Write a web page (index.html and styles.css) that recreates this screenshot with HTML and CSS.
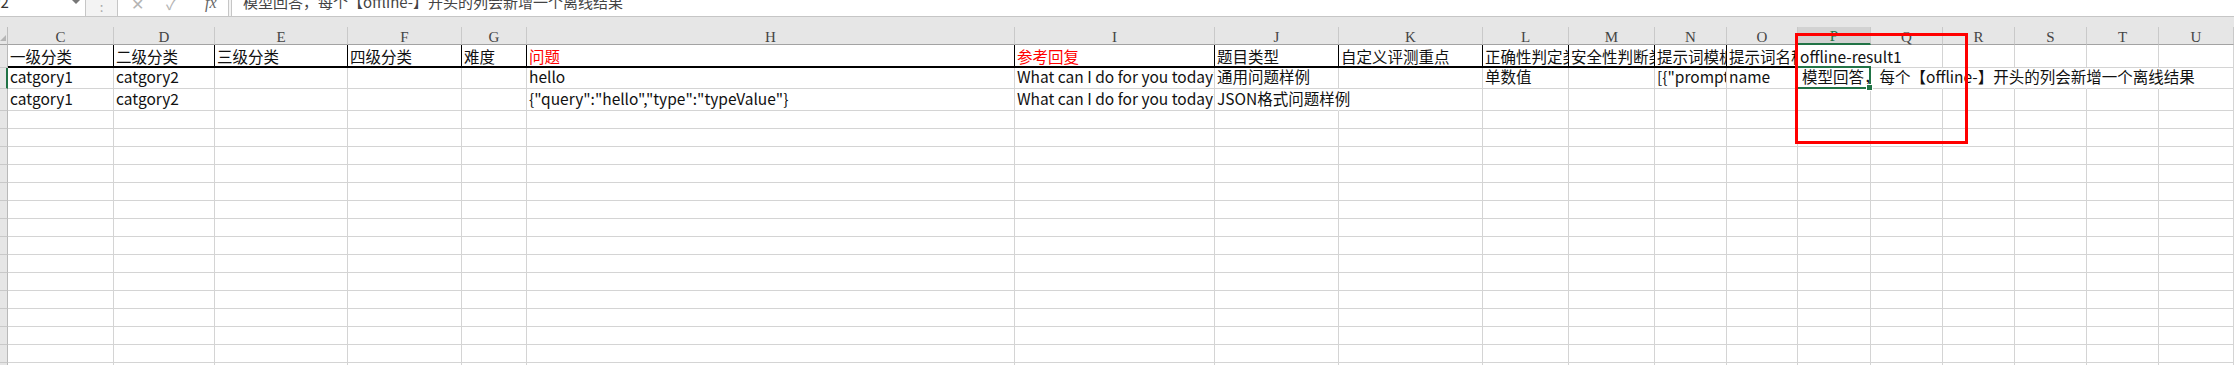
FILE: index.html
```
<!DOCTYPE html>
<html>

<head>
    <title>offline result sheet</title>
    <link rel="stylesheet" href="styles.css">
</head>

<body>
    <div class="page">

        <!-- formula bar -->
        <div class="fbar">
            <div class="namebox"><span class="nametext">P2</span><span class="drop"></span></div>
            <div class="dots">:</div>
            <div class="fxbox">
                <span class="fxicon off">✕</span>
                <span class="fxicon off">✓</span>
                <span class="fxicon fx">fx</span>
            </div>
            <div class="formula"><span class="ftext">模型回答，每个【offline-】开头的列会新增一个离线结果</span></div>
        </div>
        <div class="band"></div>

        <div class="sheet" id="sheet">
            <!-- column letters -->
            <div class="corner"><span class="tri"></span></div>
            <div class="ch">C</div>
            <div class="ch">D</div>
            <div class="ch">E</div>
            <div class="ch">F</div>
            <div class="ch">G</div>
            <div class="ch">H</div>
            <div class="ch">I</div>
            <div class="ch">J</div>
            <div class="ch">K</div>
            <div class="ch">L</div>
            <div class="ch">M</div>
            <div class="ch">N</div>
            <div class="ch">O</div>
            <div class="ch on">P</div>
            <div class="ch">Q</div>
            <div class="ch">R</div>
            <div class="ch">S</div>
            <div class="ch">T</div>
            <div class="ch">U</div>

            <!-- row 1 : headers -->
            <div class="rh"></div>
            <div class="c hd">一级分类</div>
            <div class="c hd">二级分类</div>
            <div class="c hd">三级分类</div>
            <div class="c hd">四级分类</div>
            <div class="c hd">难度</div>
            <div class="c hd red">问题</div>
            <div class="c hd red">参考回复</div>
            <div class="c hd">题目类型</div>
            <div class="c hd">自定义评测重点</div>
            <div class="c hd">正确性判定类型</div>
            <div class="c hd">安全性判断类型</div>
            <div class="c hd">提示词模板</div>
            <div class="c hd">提示词名称</div>
            <div class="c top spill nob">offline-result1</div>
            <div class="c top"></div>
            <div class="c top"></div>
            <div class="c top"></div>
            <div class="c top"></div>
            <div class="c top"></div>

            <!-- row 2 -->
            <div class="rh on"></div>
            <div class="c">catgory1</div>
            <div class="c">catgory2</div>
            <div class="c"></div>
            <div class="c"></div>
            <div class="c"></div>
            <div class="c">hello</div>
            <div class="c">What can I do for you today?</div>
            <div class="c">通用问题样例</div>
            <div class="c"></div>
            <div class="c">单数值</div>
            <div class="c"></div>
            <div class="c">[{"prompt":"你好"}]</div>
            <div class="c">name</div>
            <div class="c spill active">模型回答，每个【offline-】开头的列会新增一个离线结果</div>
            <div class="c nob"></div>
            <div class="c nob"></div>
            <div class="c nob"></div>
            <div class="c nob"></div>
            <div class="c"></div>

            <!-- row 3 -->
            <div class="rh"></div>
            <div class="c">catgory1</div>
            <div class="c">catgory2</div>
            <div class="c"></div>
            <div class="c"></div>
            <div class="c"></div>
            <div class="c">{"query":"hello","type":"typeValue"}</div>
            <div class="c">What can I do for you today?</div>
            <div class="c spill nob">JSON格式问题样例</div>
            <div class="c"></div>
            <div class="c"></div>
            <div class="c"></div>
            <div class="c"></div>
            <div class="c"></div>
            <div class="c"></div>
            <div class="c"></div>
            <div class="c"></div>
            <div class="c"></div>
            <div class="c"></div>
            <div class="c"></div>
        </div>

        <!-- annotation box -->
        <div class="mark"></div>
    </div>

    <script>
        // fill the rest of the sheet with blank rows
        var sheet = document.getElementById("sheet");
        for (let r = 0; r < 15; r++) {
            let rh = document.createElement("div");
            rh.className = "rh";
            sheet.appendChild(rh);
            for (let i = 0; i < 19; i++) {
                let cell = document.createElement("div");
                cell.className = "c";
                sheet.appendChild(cell);
            }
        }
    </script>
</body>

</html>
```

FILE: styles.css
```
body {
    margin: 0;
    background-color: white;
    overflow: hidden;
}

.page {
    position: relative;
    width: 2234px;
    height: 365px;
    overflow: hidden;
    font-family: "Noto Sans CJK SC", "Noto Sans", sans-serif;
}

/* formula bar */

.fbar {
    display: flex;
    height: 16px;
    background-color: #f3f3f3;
    border-bottom: 1px solid #c6c6c6;
    overflow: hidden;
}

.namebox {
    display: flex;
    width: 85px;
    background-color: white;
    border-right: 1px solid #c6c6c6;
    overflow: hidden;
}

.nametext {
    margin-left: -9px;
    margin-top: -6px;
    font-size: 15px;
    line-height: 16px;
    color: #333;
}

.drop {
    margin-left: auto;
    margin-right: 5px;
    width: 0;
    height: 0;
    border-left: 4px solid transparent;
    border-right: 4px solid transparent;
    border-top: 4px solid #777;
}

.dots {
    width: 31px;
    text-align: center;
    font-size: 13px;
    line-height: 14px;
    color: #a8a8a8;
}

.fxbox {
    display: flex;
    width: 110px;
    background-color: white;
    border-left: 1px solid #c6c6c6;
    border-right: 1px solid #c6c6c6;
    overflow: hidden;
}

.fxicon {
    margin-top: -5px;
    font-size: 16px;
    line-height: 16px;
}

.fxicon.off {
    color: #b4b4b4;
    margin-left: 13px;
    width: 22px;
}

.fxicon.fx {
    margin-left: 17px;
    font-family: "Liberation Serif", serif;
    font-style: italic;
    color: #666;
}

.formula {
    flex: 1;
    margin-left: 2px;
    background-color: white;
    border-left: 1px solid #c6c6c6;
    overflow: hidden;
}

.ftext {
    display: block;
    margin-top: -6px;
    margin-left: 11px;
    font-size: 15px;
    line-height: 16px;
    color: #444;
    white-space: nowrap;
}

.band {
    height: 10px;
    background-color: #e6e6e6;
}

/* sheet grid */

.sheet {
    display: grid;
    grid-template-columns: 8px 106px 101px 133px 114px 65px 488px 200px 124px 144px 86px 86px 72px 71px 73px 72px 72px 72px 72px 1fr;
    grid-template-rows: 18px 23px 21px 22px;
    grid-auto-rows: 18px;
}

.corner {
    position: relative;
    background-color: #e6e6e6;
    border-right: 1px solid #bdbdbd;
    border-bottom: 1px solid #a3a3a3;
}

.tri {
    position: absolute;
    left: 0;
    bottom: 3px;
    width: 0;
    height: 0;
    border-left: 6px solid transparent;
    border-bottom: 6px solid #b5b5b5;
}

.ch {
    display: flex;
    justify-content: center;
    align-items: flex-end;
    background-color: #e6e6e6;
    border-right: 1px solid #c9c9c9;
    border-bottom: 1px solid #a3a3a3;
    font-family: "Liberation Serif", serif;
    font-size: 15px;
    line-height: 14px;
    color: #444;
}

.ch.on {
    background-color: #d2d2d2;
    color: #217346;
    border-bottom: 2px solid #217346;
}

.rh {
    background-color: #e6e6e6;
    border-right: 1px solid #b9b9b9;
    border-bottom: 1px solid #c9c9c9;
}

.rh.on {
    border-right: 2px solid #217346;
}

.c {
    display: flex;
    align-items: flex-end;
    box-sizing: border-box;
    padding: 0 2px 2px 2px;
    border-right: 1px solid #d4d4d4;
    border-bottom: 1px solid #d4d4d4;
    font-size: 15.5px;
    line-height: 20px;
    color: #111;
    white-space: nowrap;
    overflow: hidden;
}

.hd {
    padding-bottom: 0;
    border-right-color: black;
    border-bottom: 2px solid black;
}

.top {
    padding-bottom: 1px;
}

.red {
    color: #ff0000;
}

.spill {
    overflow: visible;
}

.nob {
    border-right-color: transparent;
}

.active {
    position: relative;
    padding-left: 4px;
}

.active::after {
    content: "";
    position: absolute;
    top: -2px;
    left: -2px;
    right: -1px;
    bottom: -1px;
    border: 2px solid #217346;
}

.active::before {
    content: "";
    position: absolute;
    right: -3px;
    bottom: -3px;
    width: 5px;
    height: 5px;
    background-color: #217346;
    border: 1px solid white;
    z-index: 1;
}

/* red annotation */

.mark {
    position: absolute;
    left: 1795px;
    top: 33px;
    width: 173px;
    height: 111px;
    box-sizing: border-box;
    border: 3px solid #ff0000;
}
```
